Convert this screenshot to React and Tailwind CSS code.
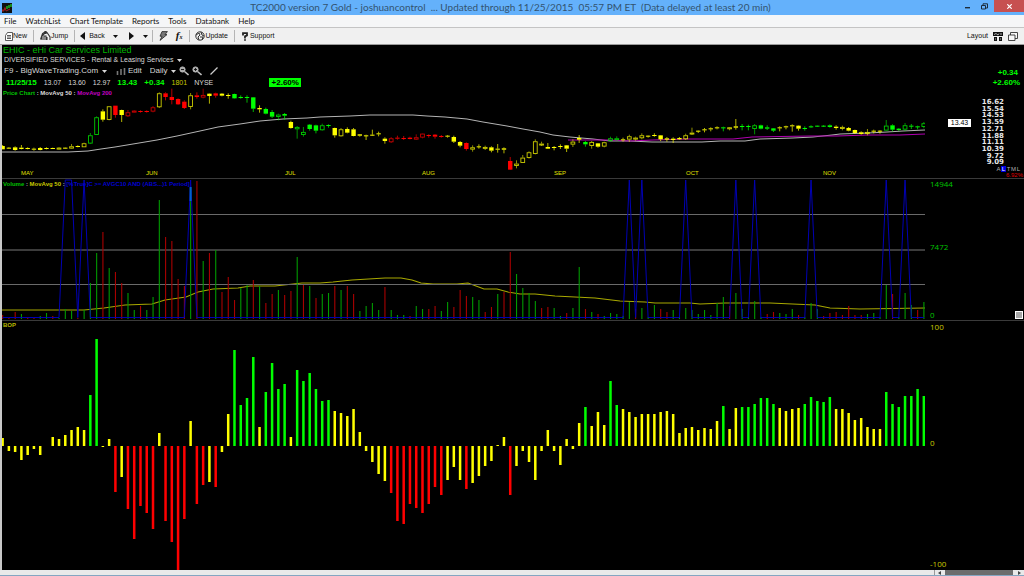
import React from 'react';

const COLORS = { y: '#ffff00', g: '#00ff00', r: '#ff0000' };
const VOLUME_COLORS = { g: '#009a00', r: '#a80000' };

// x of the n-th daily bar inside the 923 unit wide plots
const barX = (i) => 0.6 + i * 6.267;

// One candle per day: color high/top/bottom/low. Uppercase color = hollow body.
const CANDLES = `
y180/183/193/193 y186/188/191/192 y184/187/195/197 y180/188/192/193 y187/189/192/193 y188/191/194/197
y186/189/195/196 y187/189/191/193 y188/189/191/192 Y186/188/193/194 y187/188/190/191 Y177/184/190/191
y181/183/186/187 Y173/175/186/186 G144/151/175/177 G94/97/149/150 y73/79/104/110 Y64/64/104/106
r62/62/90/98 y74/75/90/111 R75/82/93/96 R75/77/82/83 r76/78/81/83 r76/78/81/83 R63/67/79/82
Y22/25/66/69 r22/25/36/46 r11/36/45/58 r40/42/58/60 r46/50/69/72 Y24/31/65/73 r22/31/36/41
R11/30/37/40 y25/26/33/56 r23/25/32/38 y24/26/32/34 y25/30/33/41 g26/27/40/41 g31/36/39/41
g31/36/39/53 g36/37/71/81 y61/69/73/83 g68/72/86/88 g75/81/95/99 G86/89/95/106 g84/87/92/104
y107/111/129/131 G123/126/132/161 G126/141/149/155 g117/119/132/137 g119/121/137/145 G116/121/135/137
g118/120/123/128 y128/129/151/158 Y129/133/153/155 y127/132/143/145 y129/133/153/154 y147/148/152/155
y149/151/153/165 y134/149/151/152 y140/145/148/154 y157/161/168/176 R156/160/171/174 r152/158/161/164
r153/159/161/165 r155/158/162/163 R148/157/163/165 R145/146/157/160 r148/150/152/158 r147/149/155/161
r150/153/155/158 y150/152/155/158 y152/156/170/174 y168/171/182/187 r172/174/192/197 Y181/187/193/200
y178/184/186/191 Y182/186/190/195 y184/187/197/202 y177/191/194/203 y187/190/194/205 r216/228/254/255
Y226/236/242/250 Y210/218/233/234 Y199/202/218/221 Y163/169/206/208 Y170/176/180/183 y174/186/191/192
y183/186/188/196 y178/183/186/192 y180/181/191/201 Y163/170/178/186 y150/159/164/174 g168/171/178/185
Y168/171/182/191 y174/175/185/188 Y170/172/184/187 G155/160/167/170 G154/160/165/167 y158/163/166/170
Y149/154/163/171 Y155/158/163/167 Y145/151/159/163 y151/152/154/158 y145/150/152/155 y150/151/163/168
y156/160/164/170 y157/161/165/174 y156/159/163/165 Y146/151/162/165 Y128/143/147/150 y136/137/139/144
y129/133/136/142 y127/130/133/139 y124/127/130/133 g125/127/129/139 Y126/127/132/136 y102/124/128/134
g117/123/125/136 g119/123/125/136 G117/121/131/148 g119/121/131/133 g121/127/131/135 g129/130/137/141
y124/127/130/139 y122/124/127/133 y118/121/124/140 y121/122/131/137 g124/129/132/137 g121/124/126/128
g121/122/124/126 g120/122/124/126 g118/121/126/128 y121/125/129/134 Y122/126/131/136 y126/129/137/139
y134/135/144/147 y139/142/147/149 Y132/141/146/151 y134/137/140/145 y135/137/139/146 G105/122/136/137
g118/121/134/139 g129/131/135/138 G114/121/133/138 g117/122/124/132 g122/124/126/133 G111/115/125/130
`.trim().split(/\s+/).map((token) => {
    const [high, top, bottom, low] = token.slice(1).split('/').map((v) => Number(v) / 3 + 40);
    const key = token[0].toLowerCase();
    return { color: COLORS[key], hollow: key !== token[0], high, top, bottom, low };
});

const parseBars = (text) => text.trim().split(/\s+/).map((token) => ({
    key: token[0],
    value: Number(token.slice(1)),
}));

const VOLUME = parseBars(`
r4 r1 r7 g5 r2 r1 g3 g6 r3 g1 g10 g8 r1 g9 g36 g66 r87 g51 r47 r36 g26 g9 r13 g9 g22 g119 r82 r78 r40 r33
g131 r138 g58 r66 g69 r27 r42 r19 g31 g34 r39 g33 r16 r25 g29 r24 r28 g62 r34 g33 r21 g25 g26 r33 g29 r33 r25
g8 g13 g16 g9 r32 g9 g4 g4 r3 g13 g10 r10 r13 g8 g17 r12 r29 r23 g22 g19 r7 r12 g25 r27 r67 g45 g31 g26 g18
r11 r12 g11 g3 r6 g11 g52 r10 g7 r5 g3 g6 g5 g3 g17 r10 g11 g2 g14 r10 r7 g9 g2 g11 g9 g5 g9 g4 g16 g22 r13
g26 g10 g2 g18 g2 r5 r7 g6 g5 g10 r4 g2 g16 g10 r3 r6 r7 r4 r13 r4 r4 g5 g6 g2 g34 r25 g2 g26 g14 r9 g17
`);

const BOP = parseBars(`
y8 y-5 y-6 y-14 y-9 y-3 y-9 y0 y9 y7 y11 y16 y19 y16 g51 g107 y-1 y7 r-46 y-31 r-63 r-93 r-60 r-67 r-83 y13
r-75 r-96 r-124 r-73 y25 r-58 r-39 y-36 r-41 y-6 y32 g96 g41 g48 g89 y19 g54 g83 g57 g62 y9 g76 g65 g73 g57
g45 g46 y35 y33 y30 y37 y14 y-5 y-16 y-28 y-35 r-47 r-75 r-78 r-58 r-62 r-67 r-58 r-41 r-49 y-34 y-21 y-34
r-43 y-37 y-30 y-20 y-15 y1 y9 r-49 y-20 y-5 y-16 y-34 y-5 y16 y-5 y-19 y7 y-3 y23 g39 y20 y34 y21 g65 g41
y37 y34 y29 y32 y32 y32 y34 y35 y32 y13 y18 y19 y16 y18 y17 y25 g40 y17 y38 g39 g39 g42 g48 g48 g42 y38 y35
y37 y38 g42 g49 g45 g44 g49 y37 y37 y33 y26 y28 y19 y17 y17 g54 g42 g39 g50 g50 g57 g50
`);

// Days on which the scan condition is true
const SIGNALS = [10, 11, 13, 30, 100, 102, 109, 117, 120, 129, 141, 144];

const MOV_AVG_50 = '0,107 66,107 86,106 99,104 113,102 131,99 155,95 175,91 198,86 216,82 238,79 258,76 281,74 305,73 318,72 348,71 368,70 411,70 425,71 443,72 465,74 481,77 505,81 521,84 538,87 551,90 568,92 591,94 608,96 627,96 650,97 700,97 718,96 743,96 758,94 791,93 811,92 830,90 838,89 866,88 885,87 901,86 923,85';
const MOV_AVG_200 = '566,95 605,95 628,96 651,95 685,94 731,94 750,92 808,91 835,91 866,90 898,90 923,89';
const VOLUME_AVG = '0,131 82,131 102,129 123,126 150,125 163,121 184,118 196,113 211,110 236,109 248,107 273,107 300,104 318,104 331,103 350,101 383,99 399,99 410,101 419,104 431,105 455,105 466,104 482,110 495,110 506,113 518,115 533,115 553,117 573,118 593,119 618,122 643,123 653,124 688,124 698,125 723,124 768,124 813,126 828,129 858,130 923,129';

const MENUS = ['File', 'WatchList', 'Chart Template', 'Reports', 'Tools', 'Databank', 'Help'];
const PRICES = ['16.62', '15.54', '14.53', '13.59', '12.71', '11.88', '11.11', '10.39', '9.72', '9.09'];
// Month labels with the share of the time axis up to the next one
const MONTHS = [['MAY', 125], ['JUN', 139], ['JUL', 137], ['AUG', 132], ['SEP', 132], ['OCT', 137], ['NOV', 102]];

const Caret = () => (
    <svg className="h-[3px] w-[5px] shrink-0" viewBox="0 0 5 3" fill="currentColor" aria-hidden="true">
        <path d="M0 0h5L2.5 3z" />
    </svg>
);

const Divider = () => <span className="h-3 w-px shrink-0 bg-[#b4b4b4]" />;

function TitleBar() {
    return (
        <header className="flex h-[15px] shrink-0 items-center bg-[#64b1fb] pl-0.5 text-[#33536f]">
            <svg className="h-[10px] w-[10px] shrink-0" viewBox="0 0 10 10" aria-hidden="true">
                <path fill="#101010" d="M0 0h10v10H0z" />
                <path stroke="#d02020" strokeWidth="1.4" d="M1 8.5V6.5M3 7.5V4.5" />
                <path stroke="#20c020" strokeWidth="1.4" d="M5 6V3M7 5V2M9 4V1" />
                <path stroke="#d02020" strokeWidth=".8" d="M4 8l4-2" />
            </svg>
            <h1 className="flex-1 whitespace-pre pl-12 text-center font-['Lato',sans-serif] text-[10px] leading-[15px]">
                TC2000 version 7 Gold - joshuancontrol  ... Updated through 11/25/2015  05:57 PM ET  (Data delayed at least 20 min)
            </h1>
            <div className="flex h-full items-start">
                <button aria-label="Minimize" className="flex h-3 w-[13px] items-center justify-center">
                    <svg className="h-2 w-[6px]" viewBox="0 0 6 8"><path fill="#1c2c3a" d="M0 5h5v1.4H0z" /></svg>
                </button>
                <button aria-label="Restore" className="flex h-3 w-[20px] items-center justify-center">
                    <svg className="h-[7px] w-[7px]" viewBox="0 0 7 7" fill="none" stroke="#1c2c3a">
                        <path d="M.5 2.5h4v3.5h-4zM2 2V.8h4.5V5H5" />
                    </svg>
                </button>
                <button aria-label="Close" className="flex h-3 w-[30px] items-center justify-center bg-[#c75050]">
                    <svg className="h-[5px] w-[5px]" viewBox="0 0 5 5" stroke="#fff" strokeWidth="1.2"><path d="M.3.3l4.4 4.4M4.7.3L.3 4.7" /></svg>
                </button>
            </div>
        </header>
    );
}

function MenuBar() {
    return (
        <nav className="flex h-3 shrink-0 items-center gap-[9px] bg-[#f5f6f7] pl-1 font-['Lato',sans-serif] text-[8px] leading-3 text-[#111]">
            {MENUS.map((name) => <button key={name}>{name}</button>)}
        </nav>
    );
}

function Toolbar() {
    return (
        <div className="flex h-[18px] shrink-0 items-center border-y border-t-[#c4c4c4] border-b-[#9c9c9c] bg-[#f0f0f0] pl-[5px] text-[7px] leading-4 text-[#111]">
            <div className="flex items-center gap-[6px]">
                <button className="flex items-center">
                    <svg className="h-[9px] w-2" viewBox="0 0 8 9" fill="#fff" stroke="#333" strokeWidth=".8">
                        <path d="M2.5.5h5v8h-7v-5z" /><path d="M2 3.5h4M2 5h4M2 6.5h4" />
                    </svg>
                    New
                </button>
                <Divider />
                <button className="flex items-center">
                    <svg className="h-[10px] w-[11px]" viewBox="0 0 11 10" fill="none" stroke="#333" strokeWidth="1.1">
                        <path d="M.5 8.5l2-6 1.5-1h3L10 6v3M2 9V5l3-3M4 9V5h2v4M7 9V6" />
                        <circle cx="5.5" cy="1.5" r="1" fill="#333" />
                    </svg>
                    Jump
                </button>
                <Divider />
            </div>
            <button className="ml-[5px] flex items-center gap-1">
                <svg className="h-2 w-[5px]" viewBox="0 0 5 8"><path fill="#111" d="M5 0v8L0 4z" /></svg>
                Back
            </button>
            <button aria-label="Back history" className="ml-2 flex h-4 items-center"><Caret /></button>
            <button aria-label="Forward" className="ml-[11px] flex h-4 items-center">
                <svg className="h-2 w-[5px]" viewBox="0 0 5 8"><path fill="#111" d="M0 0v8l5-4z" /></svg>
            </button>
            <button aria-label="Forward history" className="mr-1 ml-[9px] flex h-4 items-center"><Caret /></button>
            <Divider />
            <button aria-label="EasyScan" className="ml-[6px]">
                <svg className="h-[10px] w-[9px]" viewBox="0 0 9 10" fill="#777" stroke="#222" strokeWidth=".8">
                    <path d="M3 .6h5.4L6 3.6h2L1 9.4l2-4.2H1z" />
                </svg>
            </button>
            <button aria-label="Formula" className="mr-[7px] ml-2 font-['Liberation_Serif',serif] text-[11px] font-bold italic">
                f<span className="text-[6px]">x</span>
            </button>
            <Divider />
            <button className="mr-[6px] ml-[5px] flex items-center">
                <svg className="h-[10px] w-[10px]" viewBox="0 0 10 10" fill="none" stroke="#333">
                    <circle cx="5" cy="5" r="4.2" /><path d="M1 4l3-2 1 2-2 2 1 3M6 1l1 3 2 1M5 6h3l-1 3" />
                </svg>
                Update
            </button>
            <Divider />
            <button className="ml-[7px] flex items-center gap-[2px]">
                <svg className="h-[9px] w-[6px]" viewBox="0 0 6 9" fill="none" stroke="#222" strokeWidth="1.8">
                    <path d="M1 3.4V1.2h4v2.2L3 4.4v2M3 7.2v1.6" />
                </svg>
                Support
            </button>
            <div className="mr-[6px] ml-auto flex items-center gap-[5px]">
                <button className="flex items-center gap-[5px]">
                    Layout
                    <svg className="h-[9px] w-[10px]" viewBox="0 0 10 9" fill="#111">
                        <path d="M0 0h10v4H0zM1 5h3v4H1zM6 5h3v4H6z" />
                        <path stroke="#f0f0f0" strokeWidth=".7" d="M1 2.5l2-1 2 1.5 1-1.5M7 2h2M2 7h1M7 7h1" fill="none" />
                    </svg>
                </button>
                <button aria-label="Windows">
                    <svg className="h-[9px] w-[10px]" viewBox="0 0 10 9" fill="#f8f8f8" stroke="#333" strokeWidth=".9">
                        <path d="M2.5.5h7v6h-7z" /><path d="M.5 3h6.5v5.5H.5z" />
                    </svg>
                </button>
            </div>
        </div>
    );
}

function Picker({ label, value, className }) {
    return (
        <label className={`flex items-center gap-[3px] ${className}`}>
            <select aria-label={label} className="cursor-pointer appearance-none bg-transparent">
                <option>{value}</option>
            </select>
            <Caret />
        </label>
    );
}

function Quote() {
    return (
        <div className="z-10 self-start justify-self-start pl-px text-[8px] leading-[10px] text-[#d8d8d8] [grid-area:1/1]">
            <h2 className="text-[9px] leading-[10px] text-[#00b400]">EHIC - eHi Car Services Limited</h2>
            <Picker label="Industry" value="DIVERSIFIED SERVICES - Rental & Leasing Services" className="h-[10px] pl-px text-[7px]" />
            <div className="flex h-3 items-center pl-px">
                <Picker label="Template" value="F9 - BigWaveTrading.Com" className="w-[112px]" />
                <button className="flex items-center gap-0.5">
                    <svg className="h-[7px] w-[10px]" viewBox="0 0 10 7" stroke="#777" strokeWidth="1.6"><path d="M1.5 3v4M5 1v6M8.5 0v7" /></svg>
                    Edit
                </button>
                <Picker label="Period" value="Daily" className="ml-2" />
                {['-', '+'].map((sign) => (
                    <button key={sign} aria-label={sign === '+' ? 'Zoom in' : 'Zoom out'} className="ml-[3px]">
                        <svg className="h-[10px] w-[10px]" viewBox="0 0 10 10" fill="#aaa" stroke="#bbb">
                            <circle cx="3.5" cy="3.5" r="2.6" /><path strokeWidth="1.6" d="M5.5 5.5L9.5 9" />
                            <path stroke="#111" strokeWidth=".9" d={sign === '+' ? 'M2 3.5h3M3.5 2v3' : 'M2 3.5h3'} />
                        </svg>
                    </button>
                ))}
                <button aria-label="Draw line" className="ml-2">
                    <svg className="h-2 w-2" viewBox="0 0 8 8" stroke="#ccc" strokeWidth="1.2"><path d="M.5 7.5L7.5.5" /></svg>
                </button>
            </div>
            <div className="flex h-[11px] items-center gap-[7px] pl-[3px] text-[7px]">
                <b className="text-[8px] text-[#00ff00]">11/25/15</b>
                <span>13.07</span>
                <span>13.60</span>
                <span>12.97</span>
                <b className="text-[8px] text-[#00ff00]">13.43</b>
                <b className="text-[8px] text-[#00ff00]">+0.34</b>
                <span className="text-[#c8c800]">1801</span>
                <span>NYSE</span>
                <b className="ml-[49px] w-8 bg-[#00ff00] text-center text-[8px] leading-[9px] text-black">+2.60%</b>
            </div>
            <p className="text-[6px] leading-[10px] font-bold text-[#dcdcdc]">
                <span className="text-[#00c000]">Price Chart</span> : MovAvg 50 : <span className="text-[#c000c0]">MovAvg 200</span>
            </p>
        </div>
    );
}

function PricePlot() {
    return (
        <svg className="h-[125px] w-full" viewBox="0 0 923 125" preserveAspectRatio="none" role="img" aria-label="Price chart">
            <polyline points={MOV_AVG_50} fill="none" stroke="#b4b4b4" />
            <polyline points={MOV_AVG_200} fill="none" stroke="#b000b0" />
            {CANDLES.map((c, i) => (
                <g key={i} stroke={c.color} opacity={c.hollow ? 0.8 : 1}>
                    <path d={`M${barX(i)} ${c.high}V${c.top}M${barX(i)} ${c.bottom}V${c.low}`} opacity="0.7" />
                    {c.hollow
                        ? <rect x={barX(i) - 1.9} y={c.top + 0.4} width="3.8" height={Math.max(c.bottom - c.top - 0.6, 1)} fill="none" strokeWidth="0.9" />
                        : <rect x={barX(i) - 2.2} y={c.top} width="4.4" height={Math.max(c.bottom - c.top, 1)} fill={c.color} stroke="none" />}
                </g>
            ))}
        </svg>
    );
}

function PricePanel() {
    return (
        <section className="grid h-[133px] shrink-0 grid-cols-1">
            <Quote />
            <div className="flex [grid-area:1/1]">
                <div className="min-w-0 flex-1">
                    <PricePlot />
                    <div className="flex h-2 pl-[19px] text-[6px] leading-[7px] text-[#e0e000]">
                        {MONTHS.map(([name, days]) => (
                            <span key={name} className="min-w-0 basis-0" style={{ flexGrow: days }}>{name}</span>
                        ))}
                    </div>
                </div>
                <aside className="flex w-[99px] shrink-0 flex-col pt-[23px] text-right">
                    <b className="pr-[6px] text-[8px] leading-[10px] text-[#00ff00]">+0.34</b>
                    <b className="pr-1 text-[8px] leading-[10px] text-[#00ff00]">+2.60%</b>
                    <ol className="relative mt-[11px] flex h-[67px] flex-col pr-5 font-['DejaVu_Sans',sans-serif] text-[7px] leading-[6px] font-bold text-[#e8e8e8]">
                        {PRICES.map((price) => <li key={price} className="min-h-0 flex-1">{price}</li>)}
                        <li className="absolute top-5 left-[23px] h-2 w-[23px] bg-white text-center font-['Liberation_Sans',sans-serif] text-[7px] leading-2 font-normal text-black">13.43</li>
                    </ol>
                    <div className="flex justify-end pr-[3px] text-[6px] leading-[6px] text-[#b0b0b0]">
                        <button className="w-[5px]">A</button>
                        <button className="w-[5px] bg-[#0000e0] text-white">L</button>
                        <button className="w-[5px]">T</button>
                        <button className="w-[5px]">M</button>
                        <button className="w-[5px]">L</button>
                    </div>
                    <span className="pr-px text-[6px] leading-[6px] text-[#e00000]">6.92%</span>
                </aside>
            </div>
        </section>
    );
}

function VolumePlot() {
    const signal = VOLUME.map((_, i) => `${barX(i)},${SIGNALS.includes(i) ? 1 : 138.5}`).join(' ');
    return (
        <svg className="h-full w-full" viewBox="0 0 923 141" preserveAspectRatio="none" role="img" aria-label="Volume chart">
            <polyline points={VOLUME_AVG} fill="none" stroke="#a8a800" strokeWidth="1.2" />
            <path d="M0 35.5H923M0 105.5H923" stroke="#6a6a6a" />
            <path d="M0 71H923" stroke="#3c3c3c" strokeWidth="2" />
            {VOLUME.map((bar, i) => (
                <rect key={i} x={barX(i) - 0.5} y={140 - bar.value} width="1.1" height={bar.value} fill={VOLUME_COLORS[bar.key]} />
            ))}
            <polyline points={signal} fill="none" stroke="#0000b4" />
            <path d={`M${barX(30)} 8V22`} stroke="#0064c8" strokeWidth="2" />
        </svg>
    );
}

function VolumePanel() {
    return (
        <section className="grid h-[142px] shrink-0 grid-cols-1 border-t border-[#3a3a3a]">
            <p className="z-10 self-start justify-self-start pl-px text-[6px] leading-[10px] font-bold text-[#b8b8b8] [grid-area:1/1]">
                <span className="text-[#00c000]">Volume</span> : <span className="text-[#c8c800]">MovAvg 50</span> : <span className="text-[#0000d0]">[%True]C &gt;= AVGC10 AND (ABS...)1 Period]</span>
            </p>
            <div className="flex min-h-0 [grid-area:1/1]">
                <div className="min-w-0 flex-1"><VolumePlot /></div>
                <div className="flex w-[99px] shrink-0 justify-between pr-px pl-[5px] font-['Open_Sans',sans-serif] text-[8px] leading-[10px] text-[#00c400]">
                    <div className="flex flex-col justify-between">
                        <span>14944</span>
                        <span className="pb-1.5">7472</span>
                        <span>0</span>
                    </div>
                    <button aria-label="Resize panes" className="mb-px h-2 w-2 self-end border border-white bg-[#a8a8a8]" />
                </div>
            </div>
        </section>
    );
}

function BopPanel() {
    return (
        <section className="grid min-h-[250px] flex-1 grid-cols-1 border-t border-[#3a3a3a]">
            <p className="z-10 self-start justify-self-start pl-px text-[6px] leading-[9px] font-bold text-[#b8b800] [grid-area:1/1]">BOP</p>
            <div className="flex min-h-0 [grid-area:1/1]">
                <div className="min-w-0 flex-1">
                    <svg className="h-full w-full" viewBox="0 0 923 249" preserveAspectRatio="none" role="img" aria-label="Balance of power chart">
                        {BOP.map((bar, i) => (
                            <rect key={i} x={barX(i) - 1.25} y={bar.value > 0 ? 125 - bar.value : 125} width="2.5" height={Math.abs(bar.value)} fill={COLORS[bar.key]} />
                        ))}
                    </svg>
                </div>
                <div className="flex w-[99px] shrink-0 flex-col justify-between pl-[5px] font-['Open_Sans',sans-serif] text-[8px] leading-3 text-[#c8c800]">
                    <span>100</span>
                    <span className="pb-1.5">0</span>
                    <span>-100</span>
                </div>
            </div>
        </section>
    );
}

function ScrollBar() {
    return (
        <footer className="flex h-[6px] shrink-0 justify-end border-b border-[#84a5c1] bg-[#e9e9e9] text-[#444]">
            <button aria-label="Scroll left" className="flex w-[11px] items-center justify-center border-l border-[#999]">
                <svg className="h-1 w-1" viewBox="0 0 4 4" fill="currentColor"><path d="M3 0v4L0 2z" /></svg>
            </button>
            <div className="w-[68px] bg-[#6c6c6c]" />
            <button aria-label="Scroll right" className="flex w-[11px] items-center justify-center">
                <svg className="h-1 w-1" viewBox="0 0 4 4" fill="currentColor"><path d="M1 0v4l3-2z" /></svg>
            </button>
        </footer>
    );
}

export default function App() {
    return (
        <div className="flex min-h-screen flex-col overflow-hidden bg-black font-['Liberation_Sans',Arial,sans-serif]">
            <TitleBar />
            <MenuBar />
            <Toolbar />
            <main className="flex flex-1 flex-col border-l-2 border-[#c8c8c8]">
                <PricePanel />
                <VolumePanel />
                <BopPanel />
            </main>
            <ScrollBar />
        </div>
    );
}
